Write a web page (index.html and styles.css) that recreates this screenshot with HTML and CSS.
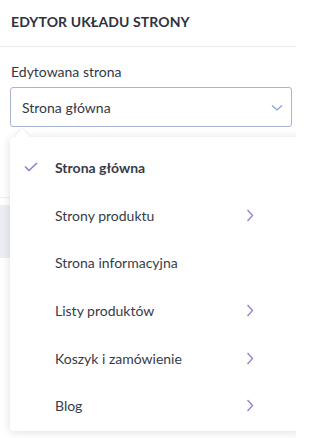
FILE: index.html
```html
<!DOCTYPE html>
<html lang="pl">
<head>
<meta charset="utf-8">
<link rel="stylesheet" href="styles.css">
</head>
<body>
<div class="panel">
  <div class="header">EDYTOR UKŁADU STRONY</div>
  <div class="field">
    <div class="label">Edytowana strona</div>
    <div class="select">
      <span>Strona główna</span>
      <svg class="caret" width="12" height="8" viewBox="0 0 12 8"><path d="M1 1.5 L6 6 L11 1.5" fill="none" stroke="#7ea3e6" stroke-width="1.3"/></svg>
    </div>
  </div>
  <div class="under">
    <div class="under-line"></div>
    <div class="under-row"></div>
  </div>

  <div class="menu">
    <div class="menu-tip"></div>
    <div class="item active">
      <svg class="check" width="14" height="10" viewBox="0 0 14 10"><path d="M1 4.5 L5 8.5 L13 1" fill="none" stroke="#8a80cc" stroke-width="1.6"/></svg>
      <span>Strona główna</span>
    </div>
    <div class="item"><span>Strony produktu</span><svg class="chev" width="8" height="13" viewBox="0 0 8 13"><path d="M1.5 1 L6.5 6.5 L1.5 12" fill="none" stroke="#8f88d0" stroke-width="1.4"/></svg></div>
    <div class="item"><span>Strona informacyjna</span></div>
    <div class="item"><span>Listy produktów</span><svg class="chev" width="8" height="13" viewBox="0 0 8 13"><path d="M1.5 1 L6.5 6.5 L1.5 12" fill="none" stroke="#8f88d0" stroke-width="1.4"/></svg></div>
    <div class="item"><span>Koszyk i zamówienie</span><svg class="chev" width="8" height="13" viewBox="0 0 8 13"><path d="M1.5 1 L6.5 6.5 L1.5 12" fill="none" stroke="#8f88d0" stroke-width="1.4"/></svg></div>
    <div class="item"><span>Blog</span><svg class="chev" width="8" height="13" viewBox="0 0 8 13"><path d="M1.5 1 L6.5 6.5 L1.5 12" fill="none" stroke="#8f88d0" stroke-width="1.4"/></svg></div>
  </div>
</div>
</body>
</html>
```

FILE: styles.css
```css
html, body {
  margin: 0;
  padding: 0;
  background: #ffffff;
  overflow: hidden;
}
body {
  font-family: "Lato", "Open Sans", sans-serif;
  color: #343846;
  width: 296px;
  height: 438px;
}
.panel {
  position: relative;
  width: 296px;
  height: 438px;
  overflow: hidden;
}
.header {
  height: 47px;
  box-sizing: border-box;
  padding: 13px 11px 0;
  font-size: 14px;
  font-weight: 700;
  letter-spacing: 0.1px;
  color: #2e323f;
  border-bottom: 1px solid #e9eaee;
}
.field {
  padding: 16px 4px 0 10px;
}
.label {
  font-size: 14px;
  padding-left: 1px;
  line-height: 18px;
  margin-bottom: 6px;
}
.select {
  height: 40px;
  box-sizing: border-box;
  border: 1px solid #a7b4d6;
  border-radius: 3px;
  display: flex;
  align-items: center;
  justify-content: space-between;
  padding: 0 8px 0 11px;
  font-size: 14px;
}
.caret {
  margin-top: 1px;
}
.under {
  padding-top: 70px;
}
.under-line {
  height: 1px;
  background: #eef0f3;
}
.under-row {
  margin-top: 7px;
  height: 53px;
  background: #eceef3;
}
.menu {
  position: absolute;
  left: 10px;
  top: 137px;
  width: 292px;
  height: 294px;
  box-sizing: border-box;
  padding-top: 7px;
  background: #fff;
  border-radius: 4px 0 0 4px;
  box-shadow: 0 1px 8px rgba(40, 45, 60, 0.16);
}
.menu-tip {
  position: absolute;
  left: 7px;
  top: -6px;
  width: 10px;
  height: 10px;
  background: #fff;
  transform: rotate(45deg);
  box-shadow: -1px -1px 3px rgba(40, 45, 60, 0.08);
}
.item {
  position: relative;
  height: 47.6px;
  display: flex;
  align-items: center;
  padding-left: 45px;
  font-size: 14px;
  color: #373b49;
}
.item span {
  flex: 1;
}
.item.active {
  font-weight: 700;
}
.check {
  position: absolute;
  left: 14px;
  top: 18px;
}
.chev {
  margin-right: 48px;
}
```
